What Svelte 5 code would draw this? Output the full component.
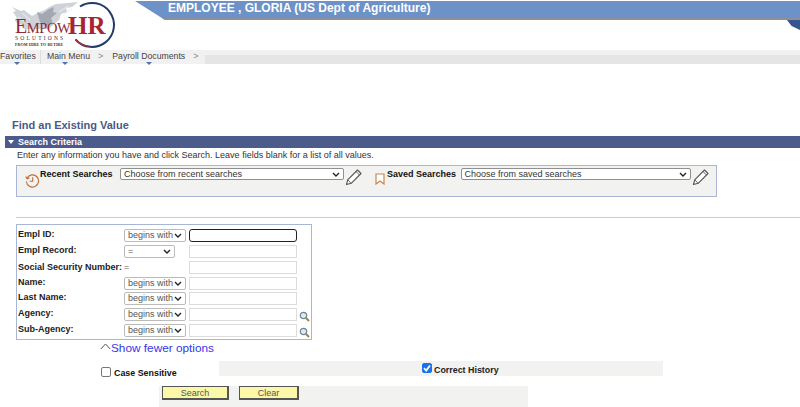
<script>
  const rows = [
    { label: 'Empl ID:', op: 'begins with', kind: 'select', focus: true },
    { label: 'Empl Record:', op: '=', kind: 'short' },
    { label: 'Social Security Number:', op: '=', kind: 'plain' },
    { label: 'Name:', op: 'begins with', kind: 'select' },
    { label: 'Last Name:', op: 'begins with', kind: 'select' },
    { label: 'Agency:', op: 'begins with', kind: 'select', lookup: true },
    { label: 'Sub-Agency:', op: 'begins with', kind: 'select', lookup: true }
  ];
</script>

{#snippet chevron()}
  <svg class="chev" viewBox="0 0 8 5" width="8" height="5"><path d="M1 1l3 3 3-3" fill="none" stroke="#222" stroke-width="1.4"/></svg>
{/snippet}

{#snippet pencil()}
  <svg class="pencil" viewBox="0 0 17 17" width="17" height="17">
    <path d="M1.500 15.500l1.200-4.700L12.500 1l3.500 3.500-9.800 9.800z" fill="#fff" stroke="#555" stroke-width="1.100" stroke-linejoin="round"/>
    <path d="M2.700 10.800l3.500 3.500M11 2.500l3.500 3.500" fill="none" stroke="#666" stroke-width="1"/>
  </svg>
{/snippet}

{#snippet lens()}
  <svg class="lens" viewBox="0 0 11 11" width="11" height="11">
    <circle cx="4.500" cy="4.500" r="3.200" fill="#dfe9ee" stroke="#6d8795" stroke-width="1.200"/>
    <path d="M7 7l3 3" stroke="#a5854a" stroke-width="2"/>
  </svg>
{/snippet}

<div class="page">
  <header class="top">
    <div class="logo">
      <svg viewBox="0 0 120 50" width="120" height="50">
        <path d="M12 7l9 4 3-1 8 6 7-4 4-1 8-5 5-2 12-1 10-1-6 5-6 1 1 4-6 2-2 6-6 5-4 4H24l-3-5-3 1-3-5 2-2-4-6 3-1z" fill="#cfd2d8"/>
        <path d="M37 12l5 2 7-5 5-2-1 5 4 1-6 5 2 6-8 2-5-4z" fill="#a3a8b2"/>
        <path d="M22 13l8 7M18 17l7 5M68 6l-9 6M72 9l-9 6" fill="none" stroke="#eef0f3" stroke-width="1"/>
        <path d="M80 6.500a22 22 0 1 1-4.500 33" fill="none" stroke="#243a6b" stroke-width="2"/>
        <path d="M75.500 39.500a22 22 0 0 0 13 7" fill="none" stroke="#b72c38" stroke-width="1.200"/>
        <text x="15" y="33" class="empow"><tspan class="cap">E</tspan>MPOW</text>
        <text x="68" y="34" class="hr">HR</text>
        <text x="15" y="39.500" class="sol">SOLUTIONS</text>
        <text x="15" y="46" class="tag">FROM HIRE TO RETIRE</text>
      </svg>
    </div>
    <div class="banner-wrap">
      <div class="banner">
        <span class="who">EMPLOYEE , GLORIA (US Dept of Agriculture)</span>
      </div>
      <div class="corner"></div>
    </div>
  </header>

  <nav class="nav">
    <span class="crumb first">Favorites</span>
    <span class="crumb">Main Menu</span><span class="sep">&gt;</span>
    <span class="crumb">Payroll Documents</span><span class="sep">&gt;</span>
    <div class="navfill"></div>
  </nav>

  <h1>Find an Existing Value</h1>

  <div class="section"><span class="tri"></span>Search Criteria</div>
  <p class="intro">Enter any information you have and click Search. Leave fields blank for a list of all values.</p>

  <div class="searches">
    <svg class="clock" viewBox="0 0 16 16" width="15" height="15">
      <path d="M2.200 5.500A6.500 6.500 0 1 1 1.500 9" fill="none" stroke="#b8703a" stroke-width="1.200"/>
      <path d="M.8 3.800l1.400 2.400 2.400-1M8.200 4.500V8.800H5" fill="none" stroke="#b8703a" stroke-width="1.200"/>
    </svg>
    <b class="slabel recent">Recent Searches</b>
    <div class="sselect recentsel"><span>Choose from recent searches</span>{@render chevron()}</div>
    {@render pencil()}
    <svg class="mark" viewBox="0 0 10 12" width="10" height="12"><path d="M1 1h8v10L5 8l-4 3z" fill="#fff" stroke="#c9874f" stroke-width="1.200"/></svg>
    <b class="slabel saved">Saved Searches</b>
    <div class="sselect savedsel"><span>Choose from saved searches</span>{@render chevron()}</div>
    {@render pencil()}
  </div>

  <hr />

  <div class="form">
    {#each rows as r, i}
      <div class="row r{i}">
        <span class="lab">{r.label}</span>
        {#if r.kind === 'plain'}
          <span class="eq">=</span>
        {:else}
          <div class="op" class:short={r.kind === 'short'}><span>{r.op}</span>{@render chevron()}</div>
        {/if}
        <div class="field" class:focus={r.focus}></div>
        {#if r.lookup}{@render lens()}{/if}
      </div>
    {/each}
  </div>

  <div class="fewer">
    <svg viewBox="0 0 11 7" width="11" height="7"><path d="M.8 6L5.500 1l4.700 5" fill="none" stroke="#555" stroke-width="1"/></svg>
    <a href="#top">Show fewer options</a>
  </div>

  <div class="checks">
    <label class="case"><span class="box"></span><span>Case Sensitive</span></label>
    <div class="strip">
      <label class="hist">
        <span class="box on"><svg viewBox="0 0 10 10" width="10" height="10"><path d="M2 5.200l2.200 2.300L8 2.500" fill="none" stroke="#fff" stroke-width="1.800"/></svg></span><span class="txt">Correct History</span>
      </label>
    </div>
  </div>

  <div class="actions">
    <button class="b1">Search</button>
    <button class="b2">Clear</button>
  </div>
</div>

<style>
  :global(body) { margin: 0; background: #fff; }
  .page { width: 800px; height: 407px; overflow: hidden; font-family: "Liberation Sans", Arial, sans-serif; color: #222; }
  .top { display: flex; height: 50px; }
  .logo { width: 135px; flex: none; }
  .logo svg { display: block; }
  .empow { font: 400 14.500px "Liberation Serif", serif; fill: #8e2a34; letter-spacing: -.4px; }
  .cap { font-size: 20px; }
  .hr { font: 700 25px "Liberation Serif", serif; fill: #a8252f; }
  .sol { font: 400 5.500px "Liberation Serif", serif; fill: #333; letter-spacing: 2.200px; }
  .tag { font: 700 4px "Liberation Serif", serif; fill: #333; letter-spacing: .1px; }
  .banner-wrap { flex: 1; position: relative; }
  .banner { height: 17px; margin-top: 1px; background: #6d92c8; border-bottom: 2px solid #8d8f98; clip-path: polygon(0 0, 100% 0, 100% 100%, 30px 100%); padding-left: 33px; }
  .who { display: block; color: #fff; font: 700 12px/14px "Liberation Sans", Arial, sans-serif; white-space: nowrap; }
  .corner { position: absolute; right: 0; top: 20px; width: 13px; height: 10px; background: #35558f; clip-path: polygon(0 0, 100% 0, 100% 100%, 35% 60%); }
  .nav { display: flex; align-items: flex-start; height: 14px; background: #f1f1f1; font-size: 8.700px; color: #444; position: relative; }
  .crumb { position: relative; padding-left: 6px; line-height: 12px; white-space: nowrap; }
  .crumb::after { content: ""; position: absolute; left: 50%; bottom: -3px; margin-left: -3px; border: 3px solid transparent; border-top-color: #4f74b4; border-bottom: 0; }
  .crumb.first { padding: 0 6px 0 0; height: 14px; width: 34px; border-right: 1px solid #ddd; }
  .crumb.first::after { left: 17px; bottom: -1px; }
  .sep { color: #888; margin: 0 9px 0 8px; font-size: 9px; line-height: 12px; }
  .sep + .crumb { padding-left: 0; }
  .navfill { position: absolute; left: 205px; right: 0; top: 5px; bottom: 0; background: #e5e5e5; }
  h1 { margin: 54px 0 0 12px; font-size: 11px; line-height: 15px; color: #4a5a85; font-weight: 700; }
  .section { margin: 3px 0 0 5px; height: 12px; background: #4b5b8c; color: #fff; font-size: 9px; font-weight: 700; line-height: 12px; display: flex; align-items: center; padding-left: 13px; position: relative; }
  .tri { position: absolute; left: 3px; top: 4px; border: 3px solid transparent; border-top: 4px solid #fff; border-bottom: 0; }
  .intro { margin: 1px 0 0 17px; font-size: 9px; line-height: 13px; color: #333; }
  .searches { margin: 3px 0 0 16px; width: 699px; height: 30px; background: #f2f2f0; border: 1px solid #a9b5d6; display: flex; align-items: flex-start; position: relative; }
  .clock { margin: 7px 0 0 8px; flex: none; }
  .slabel { font-size: 9px; line-height: 12px; color: #111; margin-top: 2px; white-space: nowrap; flex: none; }
  .recent { width: 80px; }
  .saved { margin-left: 2px; width: 73.500px; }
  .sselect { box-sizing: border-box; background: #fff; border: 1px solid #8f8f8f; border-radius: 2px; height: 12px; font-size: 9px; line-height: 10px; color: #333; display: flex; justify-content: space-between; align-items: center; padding: 0 3px; margin-top: 2px; flex: none; }
  .recentsel { width: 224px; }
  .savedsel { width: 230px; }
  .pencil { margin: 3px 0 0 1px; flex: none; }
  .mark { margin: 7px 0 0 13px; flex: none; }
  hr { margin: 20px 0 0 16px; border: 0; height: 1px; background: #c5cde2; }
  .form { margin: 6px 0 0 16px; width: 294px; height: 110px; border: 1px solid #a9b5d6; padding-top: 4px; }
  .row { display: flex; align-items: flex-start; height: 16px; }
  .r3 { height: 15px; }
  .lab { font-size: 9px; font-weight: 700; line-height: 11px; color: #222; margin-left: 1px; width: 106px; flex: none; white-space: nowrap; }
  .r2 .lab { line-height: 13px; }
  .eq { font-size: 9px; line-height: 13px; color: #666; width: 65px; flex: none; }
  .op { width: 62px; margin-right: 3px; flex: none; box-sizing: border-box; height: 13px; border: 1px solid #bbb; border-radius: 2px; font-size: 9px; line-height: 11px; color: #555; display: flex; justify-content: space-between; align-items: center; padding: 0 3px; background: #fff; white-space: nowrap; }
  .op.short { width: 51px; margin-right: 14px; }
  .field { width: 108px; box-sizing: border-box; height: 13px; border: 1px solid #dcdcdc; background: #fff; flex: none; }
  .field.focus { border: 1.500px solid #222; border-radius: 3px; }
  .lens { margin: 3px 0 0 2px; flex: none; }
  .fewer { display: flex; align-items: flex-start; margin: 1px 0 0 100px; height: 14px; }
  .fewer a { color: #3535e8; font-size: 11.800px; line-height: 14px; text-decoration: none; }
  .fewer svg { margin-top: 2px; flex: none; }
  .checks { display: flex; margin: 6px 0 0 101px; height: 15px; }
  .case { width: 118px; display: flex; align-items: flex-start; flex: none; font-size: 8.900px; line-height: 12px; font-weight: 700; color: #111; padding-top: 6px; box-sizing: border-box; }
  .box { width: 10px; height: 10px; box-sizing: border-box; border: 1px solid #777; border-radius: 2px; background: #fff; margin-right: 3px; display: block; flex: none; }
  .box.on { background: #1a73e8; border-color: #1a73e8; margin-right: 2px; }
  .box svg { display: block; margin: -1px; }
  .strip { width: 444px; background: #f2f2f0; padding-left: 203px; box-sizing: border-box; }
  .hist { display: flex; align-items: flex-start; padding-top: 2px; font-size: 8.900px; line-height: 12px; font-weight: 700; color: #222; white-space: nowrap; }
  .txt { margin-top: 1px; }
  .actions { margin: 10px 0 0 159px; width: 369px; height: 21px; background: #f2f2f0; display: flex; align-items: flex-start; }
  button { height: 14px; box-sizing: border-box; padding: 0; background: #fbf8a8; border: 1px solid #555; border-right-width: 2px; border-bottom-width: 2px; font: 9px/10px "Liberation Sans", Arial, sans-serif; color: #555; }
  .b1 { width: 67px; margin-left: 3px; }
  .b2 { width: 60px; margin-left: 10px; }
</style>
